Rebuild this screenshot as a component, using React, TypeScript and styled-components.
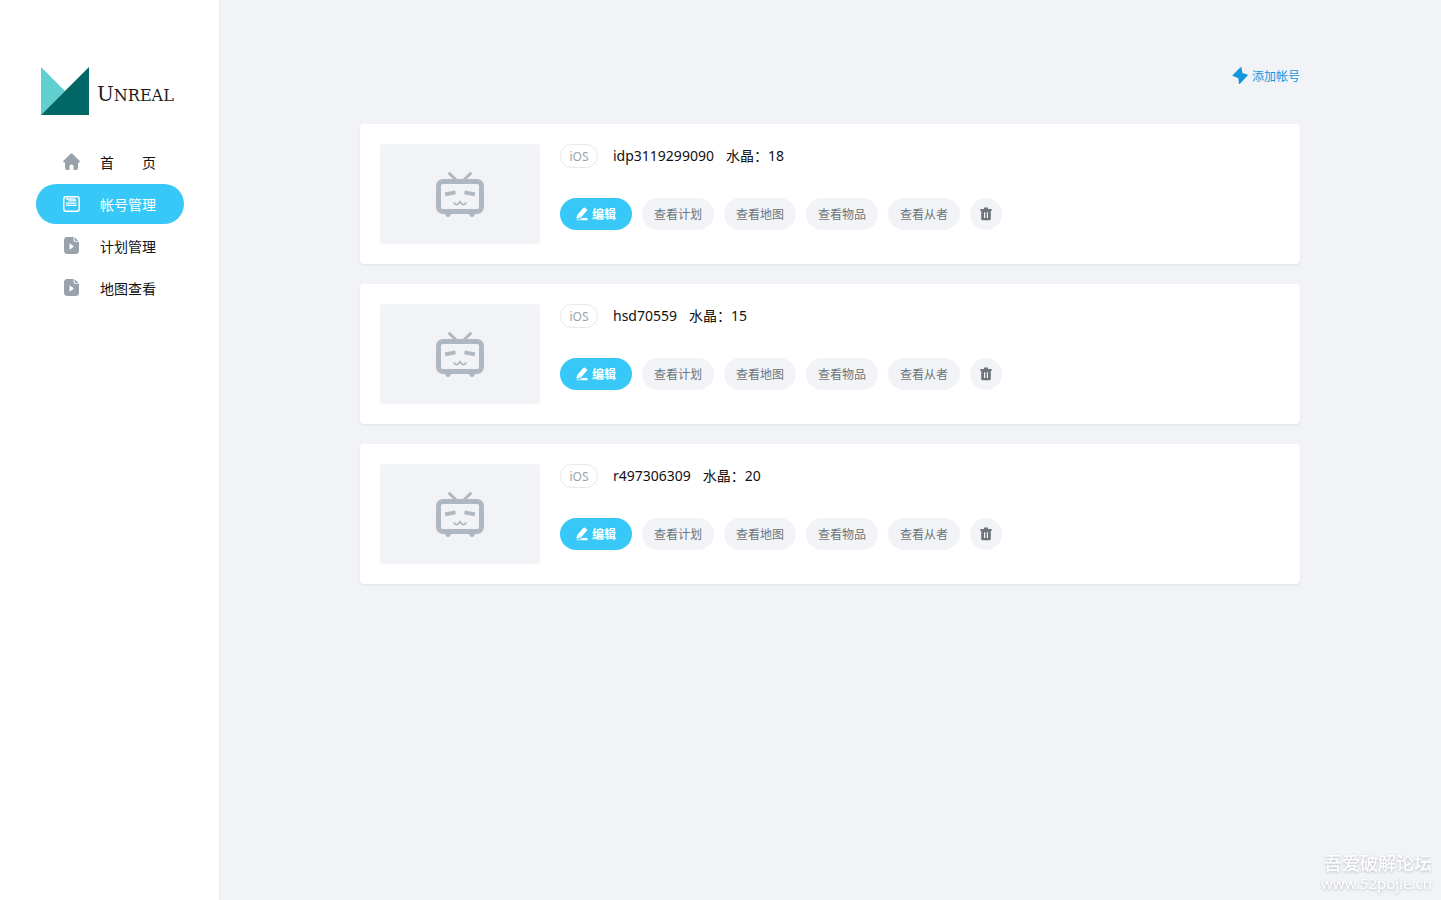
import React from "react";
import styled, { createGlobalStyle } from "styled-components";

const GlobalStyle = createGlobalStyle`
  *, *::before, *::after { box-sizing: border-box; }
  body {
    margin: 0;
    background: #f1f3f7;
    color: #111;
    font-family: "Noto Sans", "Noto Sans CJK SC", sans-serif;
    font-size: 14px;
    line-height: 20px;
  }
  button { font-family: inherit; cursor: pointer; }
  svg { display: block; flex: none; }
`;

const Page = styled.div`
  display: flex;
  min-height: 100vh;
`;

const Sidebar = styled.aside`
  flex: none;
  width: 220px;
  padding: 67px 35px 0 36px;
  background: #fff;
  border-right: 1px solid #e7e8f0;
`;

const Brand = styled.a`
  display: flex;
  gap: 8px;
  height: 48px;
  margin: 0 0 27px 5px;
  color: #231c1c;
  text-decoration: none;
`;

const BrandName = styled.span`
  padding-top: 15px;
  font-family: "DejaVu Serif", serif;
  font-size: 16px;
  line-height: 24px;
  white-space: nowrap;
`;

const BrandInitial = styled.span`
  font-size: 20px;
`;

const Nav = styled.nav`
  display: flex;
  flex-direction: column;
  gap: 2px;
`;

const NavLink = styled.a<{ $active?: boolean }>`
  display: flex;
  align-items: center;
  gap: 19px;
  height: 40px;
  padding: 0 25px 0 27px;
  border-radius: 20px;
  white-space: nowrap;
  text-decoration: none;
  color: ${(p) => (p.$active ? "#fff" : "#111")};
  background: ${(p) => (p.$active ? "#38c8f8" : "transparent")};

  svg { color: ${(p) => (p.$active ? "#fff" : "#99a2aa")}; }
`;

const NavLabel = styled.span`
  padding-top: 2px;
`;

const Main = styled.main`
  flex: 1;
  min-width: 0;
  padding: 66px 141px 40px 140px;
`;

const Toolbar = styled.div`
  display: flex;
  justify-content: flex-end;
  margin-bottom: 38px;
`;

const AddButton = styled.button`
  display: flex;
  align-items: center;
  gap: 4px;
  height: 20px;
  padding: 0;
  border: 0;
  background: none;
  color: #1296db;
  font-size: 12px;
`;

const CardList = styled.ul`
  display: flex;
  flex-direction: column;
  gap: 20px;
  margin: 0;
  padding: 0;
  list-style: none;
`;

const Card = styled.li`
  display: flex;
  gap: 20px;
  padding: 20px;
  border-radius: 4px;
  background: #fff;
  box-shadow: 0 1px 2px #dfe1ea;
`;

const Thumb = styled.div`
  display: flex;
  flex: none;
  align-items: center;
  justify-content: center;
  width: 160px;
  height: 100px;
  border-radius: 4px;
  background: #f1f3f7;
`;

const Info = styled.div`
  flex: 1;
  min-width: 0;
`;

const Title = styled.div`
  display: flex;
  align-items: center;
  gap: 12px;
  height: 24px;
  margin-bottom: 30px;
`;

const Platform = styled.span`
  width: 38px;
  height: 24px;
  margin-right: 3px;
  border: 1px solid #e7e7ef;
  border-radius: 12px;
  color: #99a2aa;
  font-size: 12px;
  line-height: 23px;
  text-align: center;
`;

const Actions = styled.div`
  display: flex;
  flex-wrap: wrap;
  gap: 10px;
`;

const PillButton = styled.button<{ $primary?: boolean; $round?: boolean }>`
  display: flex;
  align-items: center;
  justify-content: center;
  gap: 4px;
  width: ${(p) => (p.$round ? "32px" : "72px")};
  height: 32px;
  padding: 0;
  border: 0;
  border-radius: 16px;
  font-size: 12px;
  font-weight: ${(p) => (p.$primary ? 700 : 400)};
  color: ${(p) => (p.$primary ? "#fff" : "#6d757a")};
  background: ${(p) => (p.$primary ? "#38c8f8" : "#f1f3f7")};
`;

const Watermark = styled.footer`
  position: fixed;
  right: 9px;
  bottom: 7px;
  color: #fff;
  font-size: 15px;
  line-height: 20px;
  text-align: right;
  text-shadow: 0 1px 3px #b4b7c2;
`;

const WatermarkName = styled.div`
  font-size: 18px;
  font-weight: 500;
`;

const LogoMark = () => (
  <svg width="48" height="48" viewBox="0 0 48 48" aria-hidden="true">
    <path d="M0 0 24 24 0 48Z" fill="#5fcfcf" />
    <path d="M48 0V48H0Z" fill="#006666" />
  </svg>
);

const HomeIcon = () => (
  <svg width="18" height="18" viewBox="0 0 18 18" fill="currentColor" aria-hidden="true">
    <path d="M7.500 .8Q8.500 0 9.500 .8L16.700 7.900Q17.300 9.300 16 9.500H15V15Q15 17 13 17H10.500V13Q10.500 11.500 8.500 11.500T6.500 13V17H4Q2 17 2 15V9.500H1Q-.3 9.300 .3 7.900Z" />
  </svg>
);

const AccountIcon = () => (
  <svg width="18" height="18" viewBox="0 0 18 18" fill="none" stroke="currentColor" aria-hidden="true">
    <rect x=".8" y="1.800" width="15.400" height="14.400" rx="2.200" strokeWidth="1.500" />
    <path d="M3 4H10.500M5.500 5.800H12M3 8.200H13.500M3 10.300H13.500M10.800 3.500 13 5.800" strokeWidth="1.300" />
  </svg>
);

const PlanIcon = () => (
  <svg width="18" height="18" viewBox="0 0 18 18" aria-hidden="true">
    <path
      fill="currentColor"
      fillRule="evenodd"
      d="M4 0H10.500V2.500Q10.500 5 13 5H16V13.500Q16 17 12.500 17H4.500Q1 17 1 13.500V3.500Q1 0 4 0ZM6.500 6.300V12.700L11 9.500Z"
    />
    <path fill="currentColor" d="M11.500 .2 15.800 4.200H13Q11.500 4.200 11.500 2.800Z" />
  </svg>
);

const BoltIcon = () => (
  <svg width="16" height="18" viewBox="0 0 16 18" fill="currentColor" aria-hidden="true">
    <path d="M9.500.4 10.300 5.400Q10.400 6 11 6.200L15.400 7.600Q16 8 15.600 8.600L8 16.700Q7 17.200 6.800 16.300L6.500 11.700Q6.400 11.100 5.800 10.900L.9 9.100Q.3 8.700 .8 8.100L8.500.3Q9.200-.2 9.500.4Z" />
  </svg>
);

const TvIcon = () => (
  <svg width="48" height="48" viewBox="0 -2 48 48" fill="none" stroke="#afb8c1" aria-hidden="true">
    <path d="M13.500 1.500 20.500 8.500M34.500 1.500 27.500 8.500" strokeWidth="3" strokeLinecap="round" />
    <rect x="2.500" y="9.500" width="43" height="30" rx="4.500" strokeWidth="5" />
    <path d="M9 22.400 19.500 20.400M28.500 20.400 39 22.400" strokeWidth="4" />
    <path d="M18.300 30.800C19 33.500 22.500 33.500 24 29.500C25.500 33.500 29 33.500 29.700 30.800" strokeWidth="1.700" strokeLinecap="round" strokeLinejoin="round" />
    <path d="M8.500 41.500H15.500L13.500 44.500Q12 45.700 10.500 44.500ZM32.500 41.500H39.500L37.500 44.500Q36 45.700 34.500 44.500Z" fill="#afb8c1" stroke="none" />
  </svg>
);

const EditIcon = () => (
  <svg width="12" height="14" viewBox="0 0 12 14" fill="currentColor" aria-hidden="true">
    <path d="M7.500.8Q8.200.2 8.900.7L10.800 2.200Q11.400 2.700 10.900 3.400L5 10.400 1.500 11.500Q.3 11.700.5 10.600L1.300 8.100Z" />
    <path d="M5.800 11H11.500V13.300H.5V12.400H4.500Z" />
  </svg>
);

const TrashIcon = () => (
  <svg width="12" height="14" viewBox="0 0 12 14" aria-hidden="true">
    <path
      fill="currentColor"
      fillRule="evenodd"
      d="M4 .5H8V2H11.700V3.700H10.800V12Q10.800 13.300 9.500 13.300H2.500Q1.200 13.300 1.200 12V3.700H.3V2H4ZM4 5.200V11H5.200V5.200ZM6.800 5.200V11H8V5.200Z"
    />
  </svg>
);

const navItems = [
  { label: "首\u3000\u3000页", icon: <HomeIcon /> },
  { label: "帐号管理", icon: <AccountIcon />, active: true },
  { label: "计划管理", icon: <PlanIcon /> },
  { label: "地图查看", icon: <PlanIcon /> },
];

const accounts = [
  { name: "idp3119299090", crystals: 18 },
  { name: "hsd70559", crystals: 15 },
  { name: "r497306309", crystals: 20 },
];

const views = ["查看计划", "查看地图", "查看物品", "查看从者"];

export default function App() {
  return (
    <>
      <GlobalStyle />
      <Page>
        <Sidebar>
          <Brand href="#">
            <LogoMark />
            <BrandName>
              <BrandInitial>U</BrandInitial>NREAL
            </BrandName>
          </Brand>
          <Nav>
            {navItems.map((item) => (
              <NavLink key={item.label} href="#" $active={item.active} aria-current={item.active ? "page" : undefined}>
                {item.icon}
                <NavLabel>{item.label}</NavLabel>
              </NavLink>
            ))}
          </Nav>
        </Sidebar>
        <Main>
          <Toolbar>
            <AddButton type="button">
              <BoltIcon />
              添加帐号
            </AddButton>
          </Toolbar>
          <CardList>
            {accounts.map((account) => (
              <Card key={account.name}>
                <Thumb>
                  <TvIcon />
                </Thumb>
                <Info>
                  <Title>
                    <Platform>iOS</Platform>
                    <span>{account.name}</span>
                    <span>水晶：{account.crystals}</span>
                  </Title>
                  <Actions>
                    <PillButton type="button" $primary>
                      <EditIcon />
                      编辑
                    </PillButton>
                    {views.map((view) => (
                      <PillButton key={view} type="button">
                        {view}
                      </PillButton>
                    ))}
                    <PillButton type="button" $round aria-label="删除">
                      <TrashIcon />
                    </PillButton>
                  </Actions>
                </Info>
              </Card>
            ))}
          </CardList>
        </Main>
      </Page>
      <Watermark>
        <WatermarkName>吾爱破解论坛</WatermarkName>
        www.52pojie.cn
      </Watermark>
    </>
  );
}
